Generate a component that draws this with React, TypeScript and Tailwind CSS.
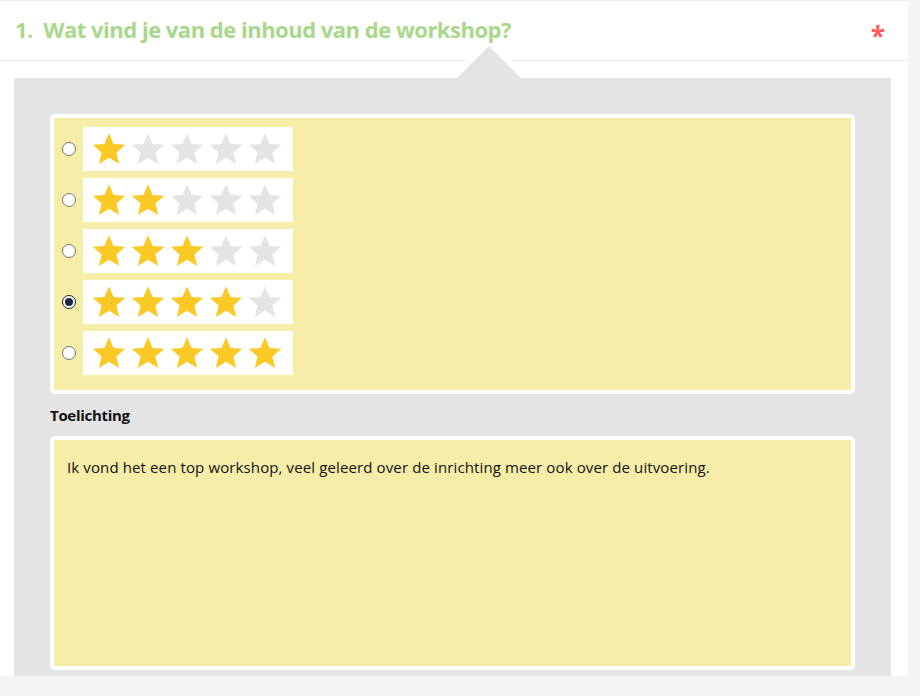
import { useState } from 'react';

const ratings = [1, 2, 3, 4, 5];

function Star({ filled }: { filled: boolean }) {
  return (
    <svg width="36" height="34" viewBox="0 0 24 23" className="shrink-0">
      <polygon
        points="12,0.8 15.1,8.1 23,8.7 17,13.9 18.9,21.7 12,17.5 5.1,21.7 7,13.9 1,8.7 8.9,8.1"
        fill={filled ? '#fbc926' : '#e4e4e4'}
      />
    </svg>
  );
}

function Radio({ checked }: { checked: boolean }) {
  return (
    <span
      className={
        'flex h-[14px] w-[14px] shrink-0 items-center justify-center rounded-full border bg-white ' +
        (checked ? 'border-[#222]' : 'border-[#767676]')
      }
    >
      {checked && <span className="h-[8px] w-[8px] rounded-full bg-[#1b2744]" />}
    </span>
  );
}

function RatingRow({ value, checked, onPick }: { value: number; checked: boolean; onPick: () => void }) {
  return (
    <button type="button" onClick={onPick} className="flex items-center gap-[7px]">
      <Radio checked={checked} />
      <span className="flex h-[44px] w-[210px] items-center gap-[3px] bg-white pl-[8px]">
        {ratings.map(n => (
          <Star key={n} filled={n <= value} />
        ))}
      </span>
    </button>
  );
}

export default function App() {
  const [score, setScore] = useState(4);
  const [note, setNote] = useState(
    'Ik vond het een top workshop, veel geleerd over de inrichting meer ook over de uitvoering.',
  );

  return (
    <div className="min-h-screen bg-[#f4f4f4] font-['Open_Sans',sans-serif]">
      <div className="flex h-[676px] w-[908px] flex-col border-t border-[#ececec] bg-white">
        <div className="flex h-[60px] shrink-0 items-start justify-between border-b border-[#e8ebef] pl-[15px] pr-[23px] pt-[12px]">
          <h1 className="text-[22px] font-bold tracking-[-0.5px] text-[#a8d88a]">
            1.&nbsp; Wat vind je van de inhoud van de workshop?
          </h1>
          <span className="pt-[10px] text-[26px] font-bold leading-none text-[#ff5b5b]">*</span>
        </div>

        <div className="flex flex-1 flex-col pl-[14px] pr-[17px] pt-[17px]">
          <div className="relative flex flex-1 flex-col bg-[#e4e4e4] px-[36px] pt-[36px]">
            {/* pointer notch under the question */}
            <svg
              width="90"
              height="40"
              viewBox="0 0 90 40"
              className="absolute left-[430px] top-[-36px]"
            >
              <polygon points="45,0 90,36 0,36" fill="#ffffff" />
              <polygon points="45,4 77,36 13,36" fill="#e4e4e4" />
              <rect x="13" y="36" width="64" height="4" fill="#e4e4e4" />
            </svg>

            <div className="rounded-[5px] bg-white p-[4px]">
              <div className="flex h-[272px] flex-col gap-[7px] bg-[#f6eda8] pl-[8px] pt-[9px]">
                {ratings.map(n => (
                  <RatingRow key={n} value={n} checked={score === n} onPick={() => setScore(n)} />
                ))}
              </div>
            </div>

            <label className="mt-[10px] text-[15px] font-bold tracking-[-0.3px] text-[#111]">Toelichting</label>

            <div className="mt-[9px] rounded-[5px] bg-white p-[4px]">
              <textarea
                value={note}
                onChange={e => setNote(e.target.value)}
                className="block h-[226px] w-full resize-none bg-[#f6eda8] px-[13px] pt-[16px] text-[15px] tracking-[0.12px] text-[#111] outline-none"
              />
            </div>
          </div>
        </div>
      </div>
    </div>
  );
}
